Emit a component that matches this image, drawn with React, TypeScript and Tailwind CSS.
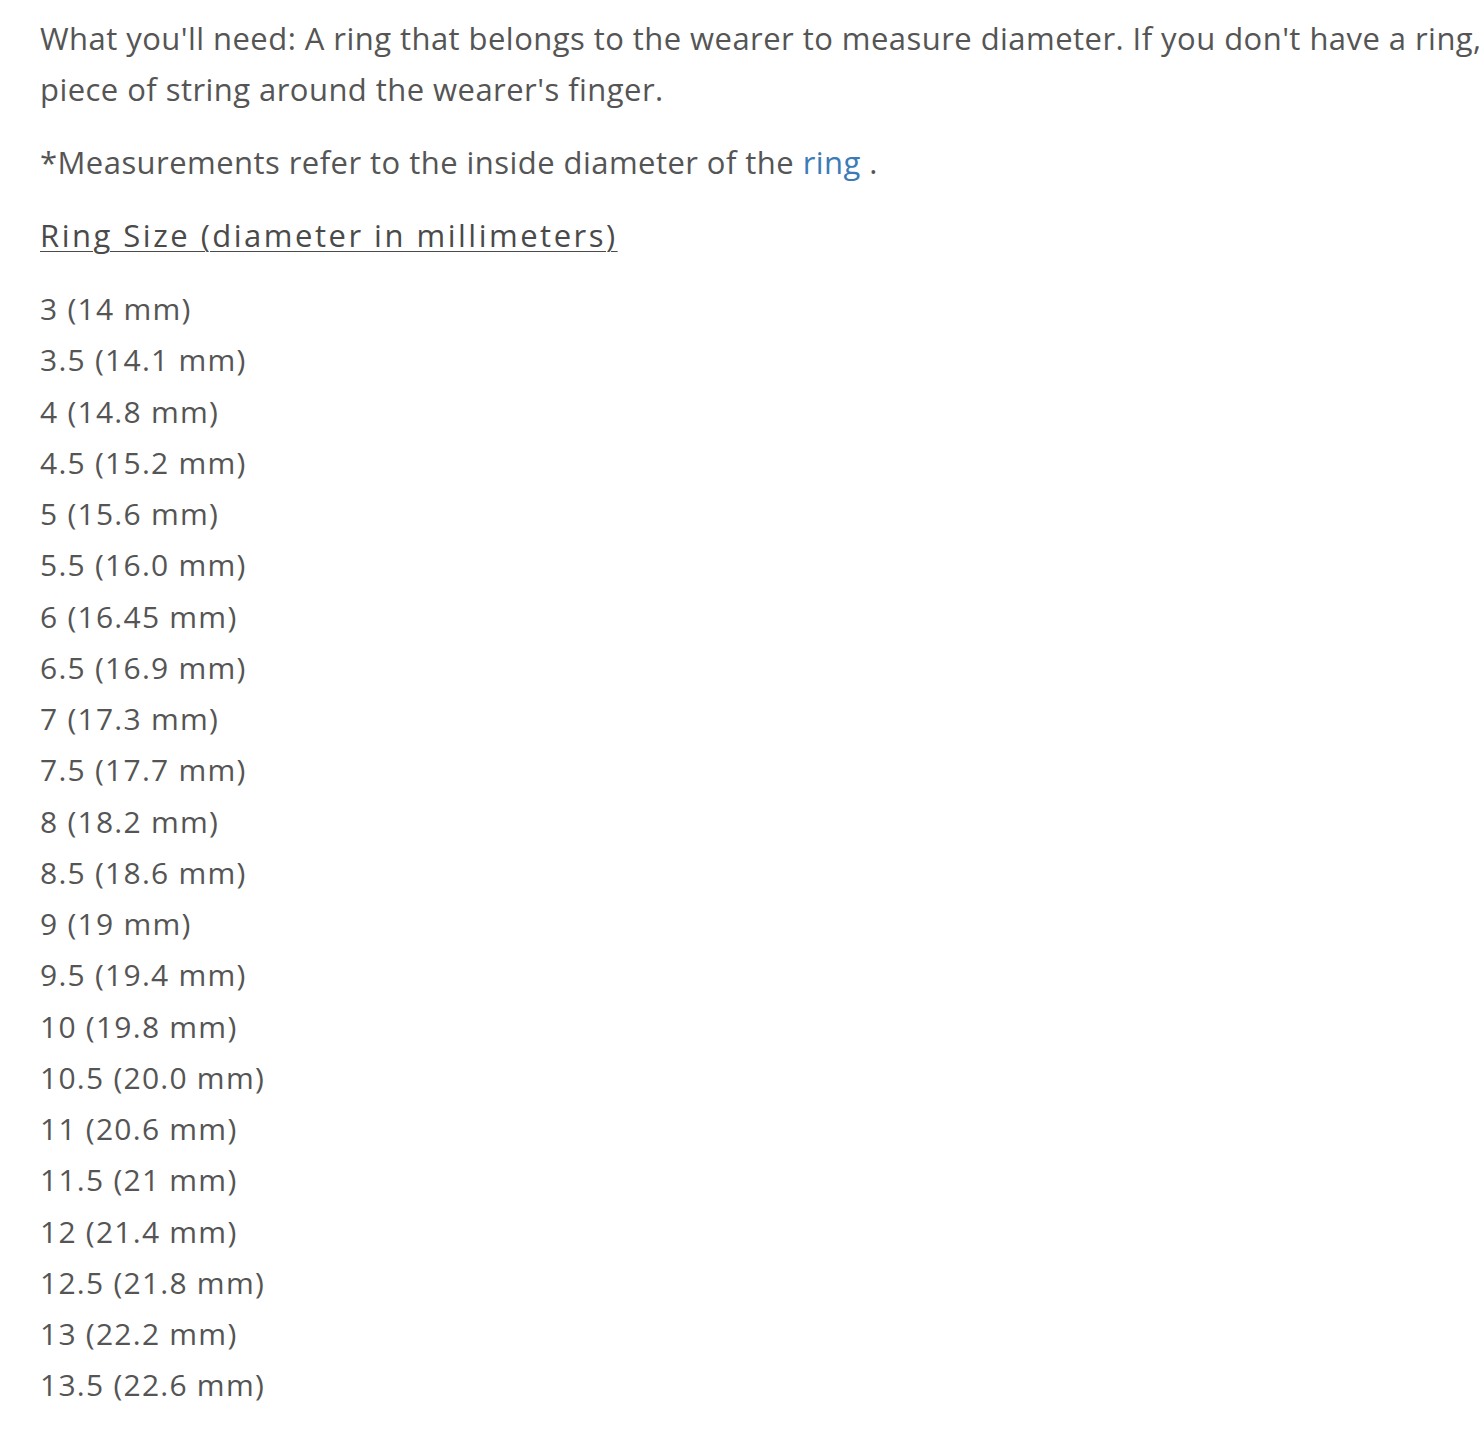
import React from 'react';

const sizes: string[] = [
  '3 (14 mm)',
  '3.5 (14.1 mm)',
  '4 (14.8 mm)',
  '4.5 (15.2 mm)',
  '5 (15.6 mm)',
  '5.5 (16.0 mm)',
  '6 (16.45 mm)',
  '6.5 (16.9 mm)',
  '7 (17.3 mm)',
  '7.5 (17.7 mm)',
  '8 (18.2 mm)',
  '8.5 (18.6 mm)',
  '9 (19 mm)',
  '9.5 (19.4 mm)',
  '10 (19.8 mm)',
  '10.5 (20.0 mm)',
  '11 (20.6 mm)',
  '11.5 (21 mm)',
  '12 (21.4 mm)',
  '12.5 (21.8 mm)',
  '13 (22.2 mm)',
  '13.5 (22.6 mm)',
];

const App = () => {
  return (
    <div className="min-h-[1453px] w-full overflow-hidden bg-white font-['Open_Sans','Liberation_Sans',sans-serif] text-[#555555]">
      <div className="w-[1800px] pl-[40px] pt-[13px]">
        <p className="whitespace-nowrap text-[31px] leading-[51px] tracking-[0.45px]">
          What you'll need: A ring that belongs to the wearer to measure diameter. If you don't have a ring,
          <br />
          piece of string around the wearer's finger.
        </p>

        <p className="mt-[22px] whitespace-nowrap text-[31px] leading-[51px] tracking-[0.45px]">
          *Measurements refer to the inside diameter of the{' '}
          <a href="#" className="text-[#3b7bb8]">
            ring
          </a>{' '}
          .
        </p>

        <h2 className="mt-[22px] text-[31px] leading-[51px] tracking-[2.5px] text-[#4a4a4a]">
          <span className="underline decoration-1 underline-offset-[4px]">
            Ring Size (diameter in millimeters)
          </span>
        </h2>

        <ul className="mt-[22px]">
          {sizes.map((size) => (
            <li key={size} className="text-[30px] leading-[51.25px] tracking-[1.25px]">
              {size}
            </li>
          ))}
        </ul>
      </div>
    </div>
  );
};

export default App;
